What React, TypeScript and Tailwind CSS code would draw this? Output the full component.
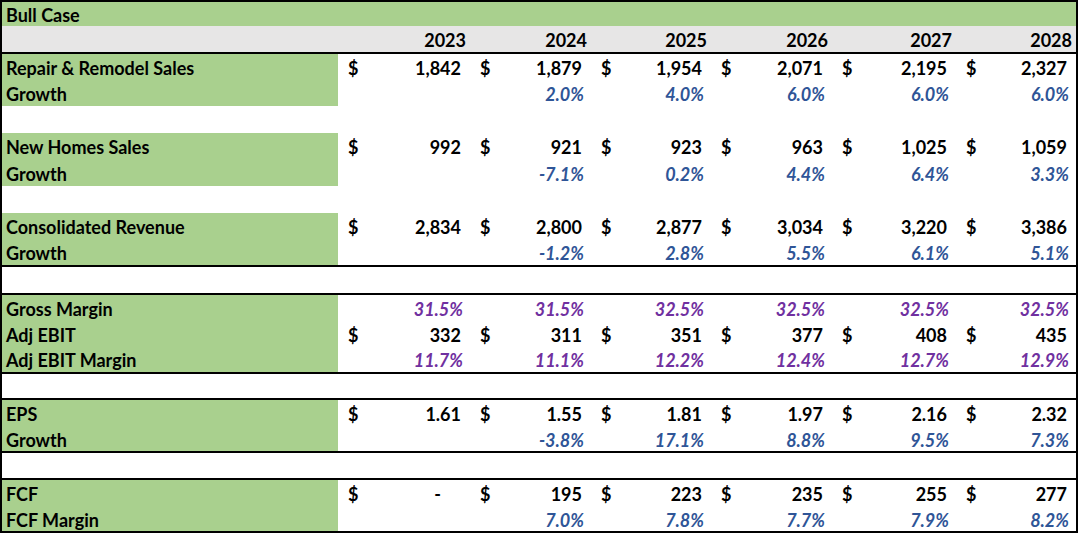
import React from "react";

type Kind = "num" | "blue" | "purple" | "dash" | "none";

const widths = ["w-[132px]", "w-[121px]", "w-[120px]", "w-[121px]", "w-[124px]", "w-[120px]"];
const years = ["2023", "2024", "2025", "2026", "2027", "2028"];

type Row = {
  label: string;
  h: string;
  dollar?: boolean;
  kind: "num" | "blue" | "purple";
  values: string[];
};

function ValueCell({ w, dollar, value, kind }: { w: string; dollar?: boolean; value: string; kind: Kind }) {
  let cls = "text-black";
  let pr = "pr-[9px]";
  if (kind === "blue") {
    cls = "text-[#2f5597] italic";
    pr = "pr-[7px]";
  } else if (kind === "purple") {
    cls = "text-[#7030a0] italic";
    pr = "pr-[7px]";
  } else if (kind === "dash") {
    pr = "pr-[29px]";
  }
  return (
    <div className={`${w} flex items-center justify-between pl-[10px] pt-[2px] ${pr}`}>
      <span>{dollar ? "$" : ""}</span>
      <span className={cls}>{value}</span>
    </div>
  );
}

function DataRow({ row }: { row: Row }) {
  return (
    <div className={`flex ${row.h}`}>
      <div className="w-[336px] bg-[#a9d08e] flex items-center pl-1 pt-[2px]">{row.label}</div>
      {row.values.map((v, i) => (
        <ValueCell
          key={i}
          w={widths[i]}
          dollar={row.dollar}
          value={v}
          kind={v === "-" ? "dash" : v === "" ? "none" : row.kind}
        />
      ))}
    </div>
  );
}

function Group({ rows }: { rows: Row[] }) {
  return (
    <div>
      {rows.map((r) => (
        <DataRow key={r.label + r.values.join()} row={r} />
      ))}
    </div>
  );
}

const Blank = ({ h }: { h: string }) => <div className={h} />;
const Line = () => <div className="h-[2px] bg-black" />;

export default function App() {
  return (
    <div className="w-[1080px] h-[534px] bg-white">
      <div
        className="w-[1078px] border-2 border-black text-[18px] font-bold text-black leading-none"
        style={{ fontFamily: "Lato, 'Liberation Sans', sans-serif" }}
      >
        {/* title */}
        <div className="h-[24px] bg-[#a9d08e] flex items-center pl-1 pt-[1px]">Bull Case</div>
        {/* years */}
        <div className="h-[26px] bg-[#e7e6e6] flex">
          <div className="w-[336px]" />
          {years.map((y, i) => (
            <div key={y} className={`${widths[i]} flex items-center justify-end pr-1 pt-[2px]`}>
              {y}
            </div>
          ))}
        </div>
        <Line />

        <Group
          rows={[
            { label: "Repair & Remodel Sales", h: "h-[26px]", dollar: true, kind: "num", values: ["1,842", "1,879", "1,954", "2,071", "2,195", "2,327"] },
            { label: "Growth", h: "h-[26px]", kind: "blue", values: ["", "2.0%", "4.0%", "6.0%", "6.0%", "6.0%"] },
          ]}
        />
        <Blank h="h-[27px]" />
        <Group
          rows={[
            { label: "New Homes Sales", h: "h-[26px]", dollar: true, kind: "num", values: ["992", "921", "923", "963", "1,025", "1,059"] },
            { label: "Growth", h: "h-[27px]", kind: "blue", values: ["", "-7.1%", "0.2%", "4.4%", "6.4%", "3.3%"] },
          ]}
        />
        <Blank h="h-[27px]" />
        <Group
          rows={[
            { label: "Consolidated Revenue", h: "h-[26px]", dollar: true, kind: "num", values: ["2,834", "2,800", "2,877", "3,034", "3,220", "3,386"] },
            { label: "Growth", h: "h-[26px]", kind: "blue", values: ["", "-1.2%", "2.8%", "5.5%", "6.1%", "5.1%"] },
          ]}
        />
        <Line />
        <Blank h="h-[26px]" />
        <Line />
        <Group
          rows={[
            { label: "Gross Margin", h: "h-[26px]", kind: "purple", values: ["31.5%", "31.5%", "32.5%", "32.5%", "32.5%", "32.5%"] },
            { label: "Adj EBIT", h: "h-[25px]", dollar: true, kind: "num", values: ["332", "311", "351", "377", "408", "435"] },
            { label: "Adj EBIT Margin", h: "h-[26px]", kind: "purple", values: ["11.7%", "11.1%", "12.2%", "12.4%", "12.7%", "12.9%"] },
          ]}
        />
        <Line />
        <Blank h="h-[24px]" />
        <Line />
        <Group
          rows={[
            { label: "EPS", h: "h-[26px]", dollar: true, kind: "num", values: ["1.61", "1.55", "1.81", "1.97", "2.16", "2.32"] },
            { label: "Growth", h: "h-[25px]", kind: "blue", values: ["", "-3.8%", "17.1%", "8.8%", "9.5%", "7.3%"] },
          ]}
        />
        <Line />
        <Blank h="h-[25px]" />
        <Line />
        <Group
          rows={[
            { label: "FCF", h: "h-[26px]", dollar: true, kind: "num", values: ["-", "195", "223", "235", "255", "277"] },
            { label: "FCF Margin", h: "h-[25px]", kind: "blue", values: ["", "7.0%", "7.8%", "7.7%", "7.9%", "8.2%"] },
          ]}
        />
      </div>
    </div>
  );
}
